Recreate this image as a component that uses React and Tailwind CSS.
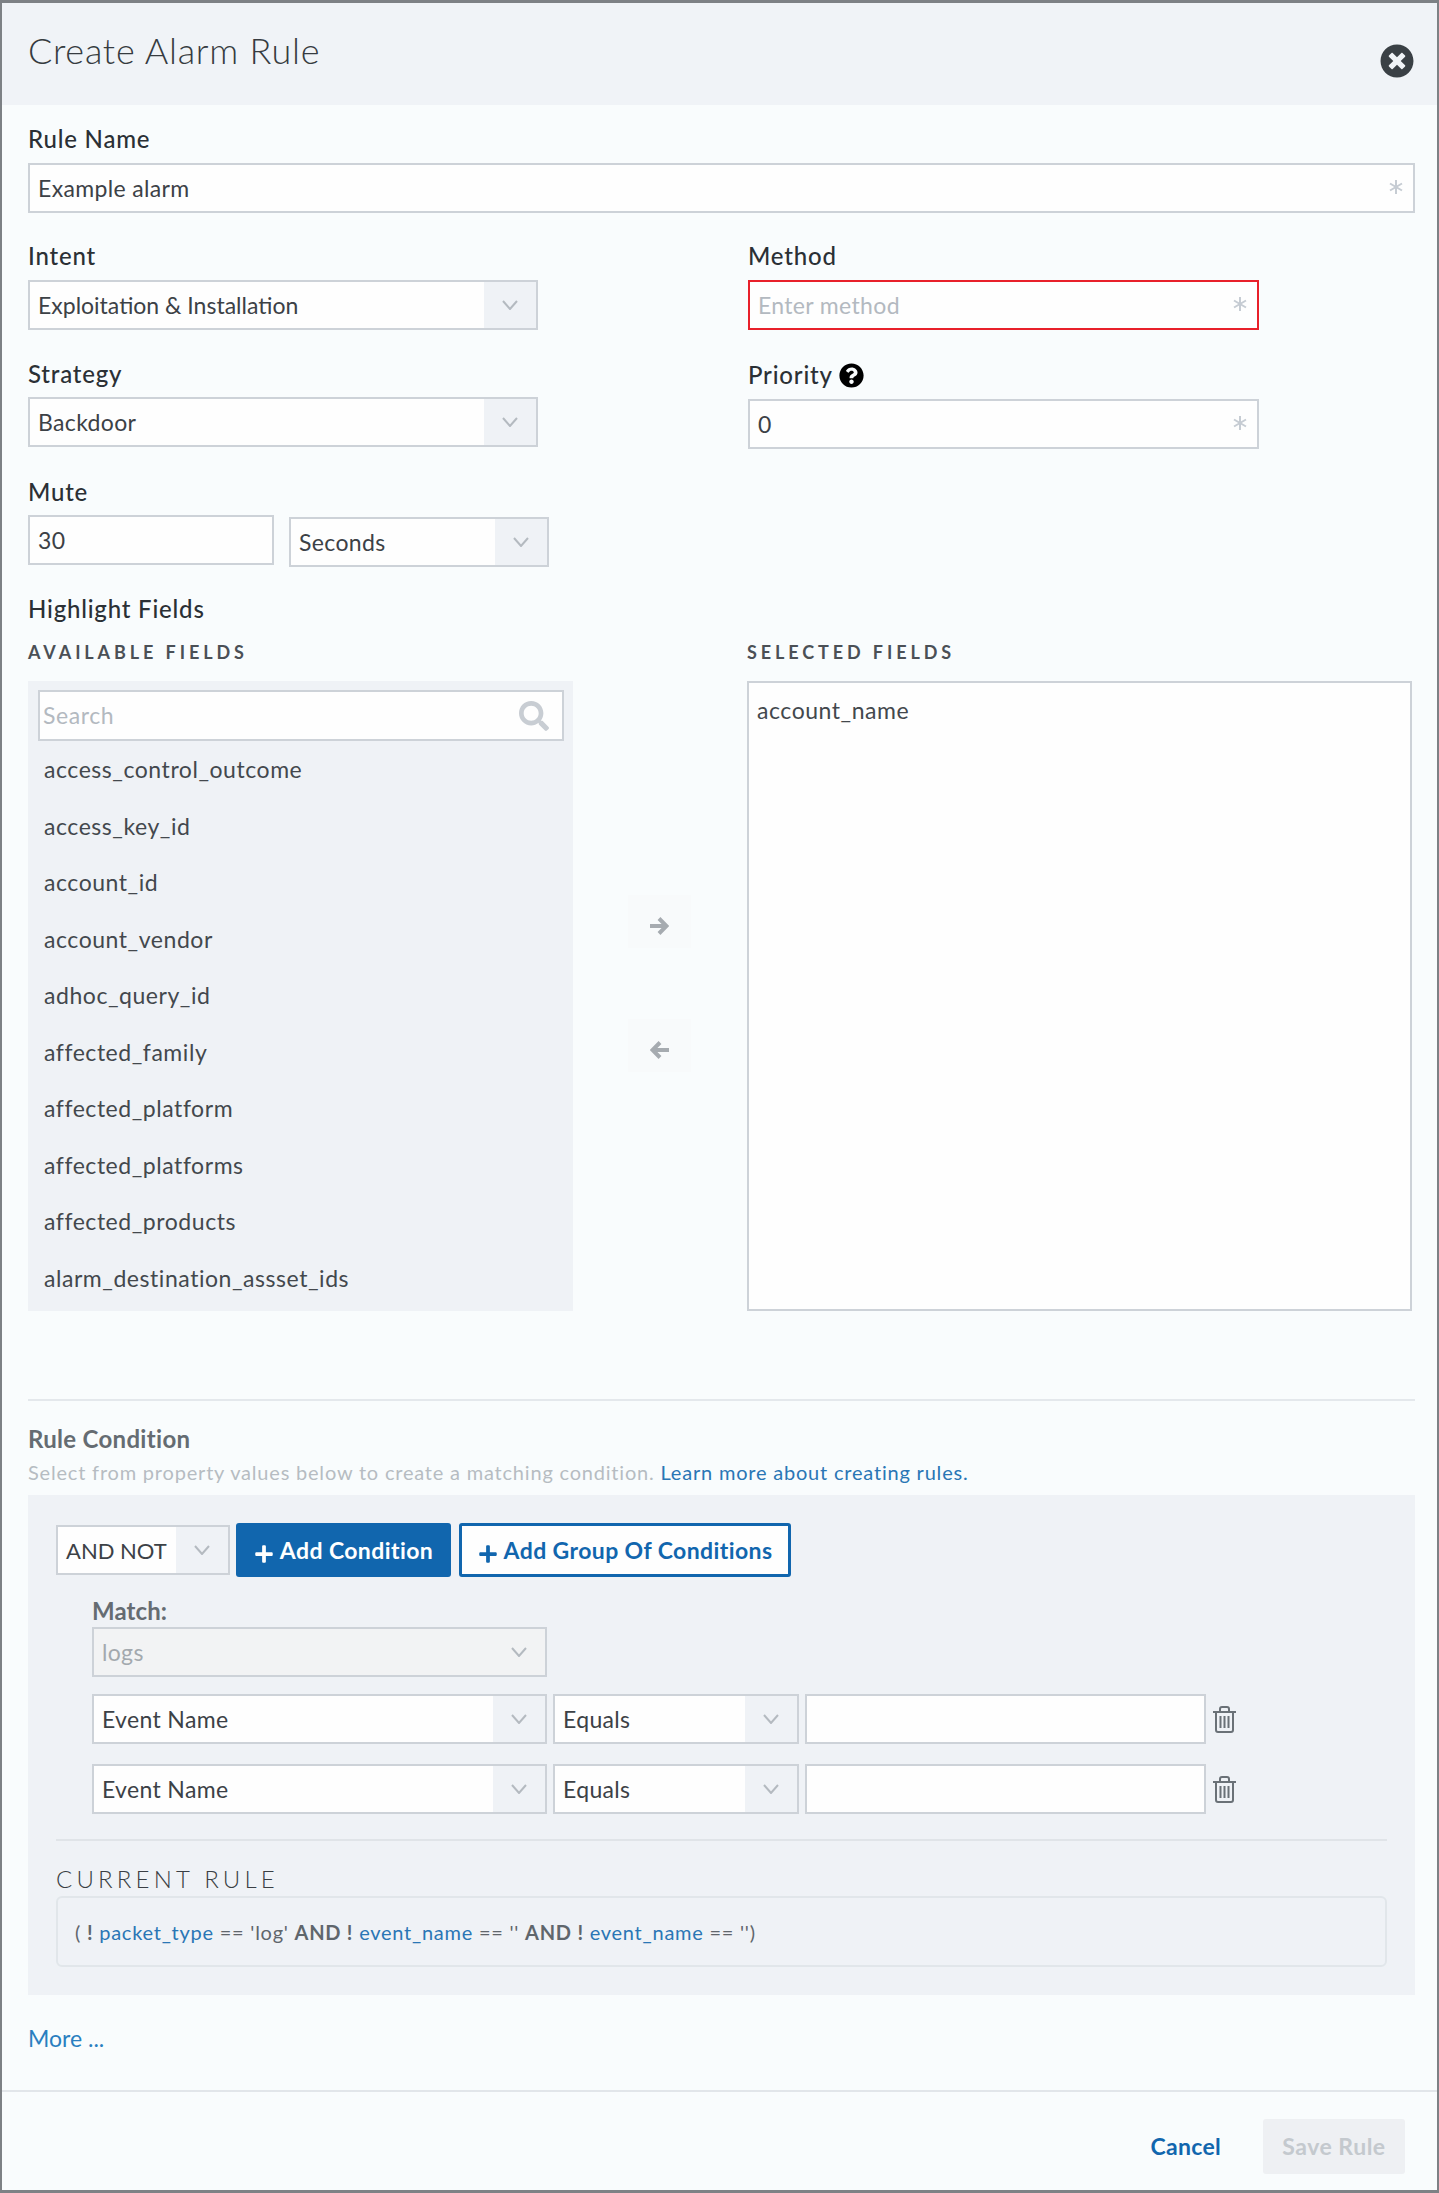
import { FaTimesCircle, FaQuestionCircle, FaSearch, FaPlus } from "react-icons/fa";

const fields = [
    "access_control_outcome",
    "access_key_id",
    "account_id",
    "account_vendor",
    "adhoc_query_id",
    "affected_family",
    "affected_platform",
    "affected_platforms",
    "affected_products",
    "alarm_destination_assset_ids",
];

function Label({ children, className = "" }) {
    return <div className={`h-[30px] leading-[30px] text-[24px] tracking-[0.8px] font-medium text-[#2b3035] ${className}`}>{children}</div>;
}

function Asterisk() {
    return (
        <svg width="14" height="14" viewBox="0 0 14 14" className="shrink-0 -mt-[3px] stroke-[#c6ccd3]" strokeWidth="2">
            <line x1="7" y1="0" x2="7" y2="14" />
            <line x1="1" y1="3.5" x2="13" y2="10.5" />
            <line x1="1" y1="10.5" x2="13" y2="3.5" />
        </svg>
    );
}

function Chevron() {
    return (
        <svg width="16" height="10" viewBox="0 0 16 10" fill="none" className="stroke-[#b4bac0]" strokeWidth="2">
            <polyline points="1,1 8,9 15,1" />
        </svg>
    );
}

function Arrow({ left }) {
    return (
        <svg width="19" height="18" viewBox="0 0 19 18" fill="none" className={`stroke-[#a6abb0] ${left ? "rotate-180" : ""}`} strokeWidth="4">
            <path d="M0 9h16" />
            <path d="M9 1.5L16.5 9L9 16.5" />
        </svg>
    );
}

function TextField({ value, placeholder, required, error, className = "" }) {
    return (
        <div className={`h-[50px] flex items-center justify-between pl-[8px] pr-[10px] bg-[#fefefe] border-2 ${error ? "border-[#e8202a]" : "border-[#cdd2d8]"} ${className}`}>
            <span className={`text-[23px] tracking-[0.35px] ${value ? "text-[#3c4146]" : "text-[#b3b9c0]"}`}>{value || placeholder}</span>
            {required && <Asterisk />}
        </div>
    );
}

function SelectBox({ value, disabled, className = "" }) {
    return (
        <div className={`h-[50px] flex items-stretch border-2 border-[#cdd2d8] ${disabled ? "bg-[#f2f3f4]" : "bg-[#fefefe]"} ${className}`}>
            <div className={`flex-1 flex items-center pl-[8px] text-[23px] tracking-[0.35px] ${disabled ? "text-[#a3a9ae]" : "text-[#3c4146]"}`}>{value}</div>
            <div className={`w-[52px] flex items-center justify-center ${disabled ? "" : "bg-[#eff2f6]"}`}>
                <Chevron />
            </div>
        </div>
    );
}

function Trash() {
    return (
        <svg width="23" height="27" viewBox="0 0 23 27" fill="none" className="stroke-[#6a7177]" strokeWidth="2">
            <path d="M0 6h23" />
            <path d="M7 6V3a2 2 0 0 1 2-2h5a2 2 0 0 1 2 2v3" />
            <path d="M3 6v18a2 2 0 0 0 2 2h13a2 2 0 0 0 2-2V6" />
            <path d="M7.5 10v12M11.5 10v12M15.5 10v12" />
        </svg>
    );
}

function ConditionRow() {
    return (
        <div className="flex items-center ml-[36px]">
            <SelectBox value="Event Name" className="w-[455px]" />
            <SelectBox value="Equals" className="w-[246px] ml-[6px]" />
            <div className="w-[401px] h-[50px] ml-[6px] bg-[#fefefe] border-2 border-[#cdd2d8]" />
            <div className="ml-[7px]">
                <Trash />
            </div>
        </div>
    );
}

export default function App() {
    return (
        <div className="w-[1439px] h-[2193px] flex flex-col bg-[#f9fcfd] border-x-2 border-y-[3px] border-[#7d8185] font-['Lato','Noto_Sans',sans-serif]">
            {/* Header */}
            <div className="h-[102px] shrink-0 bg-[#f0f3f7] pl-[26px] pr-[22px] flex items-start justify-between">
                <h1 className="mt-[25px] text-[36px] leading-[44px] tracking-[0.75px] font-light text-[#363b40]">Create Alarm Rule</h1>
                <FaTimesCircle className="mt-[41px] mr-[1px] text-[34px] text-[#3a4045]" />
            </div>

            <div className="flex-1 pl-[26px] pr-[22px]">
                <Label className="mt-[19px] mb-[9px]">Rule Name</Label>
                <TextField value="Example alarm" required />

                <div className="mt-[28px] flex">
                    <div className="w-[510px]">
                        <Label className="mb-[9px]">Intent</Label>
                        <SelectBox value={<span className="tracking-normal">Exploitation &amp; Installation</span>} />
                        <Label className="mt-[29px] mb-[8px]">Strategy</Label>
                        <SelectBox value="Backdoor" />
                    </div>
                    <div className="w-[511px] ml-[210px]">
                        <Label className="mb-[9px]">Method</Label>
                        <TextField placeholder="Enter method" required error />
                        <Label className="mt-[30px] mb-[9px] flex items-center gap-[6px] tracking-[0.4px]">
                            Priority <FaQuestionCircle className="text-[25px] text-black" />
                        </Label>
                        <TextField value="0" required />
                    </div>
                </div>

                <Label className="mt-[28px] mb-[8px]">Mute</Label>
                <div className="flex items-start">
                    <TextField value="30" className="w-[246px]" />
                    <SelectBox value="Seconds" className="w-[260px] ml-[15px] mt-[2px]" />
                </div>

                <Label className="mt-[27px]">Highlight Fields</Label>

                {/* Field picker */}
                <div className="mt-[17px] flex">
                    <div className="w-[545px]">
                        <div className="h-[22px] leading-[22px] text-[18px] font-bold tracking-[3.9px] text-[#4b5056]">AVAILABLE FIELDS</div>
                        <div className="mt-[18px] h-[630px] bg-[#eff2f6] pt-[9px] pl-[10px] pr-[9px]">
                            <div className="h-[51px] flex items-center justify-between pl-[3px] pr-[13px] bg-[#fefefe] border-2 border-[#cdd2d8]">
                                <span className="text-[23px] tracking-[0.6px] text-[#b3b9c0]">Search</span>
                                <FaSearch className="text-[30px] text-[#c8cdd3]" />
                            </div>
                            <ul className="pl-[6px]">
                                {fields.map((name) => (
                                    <li key={name} className="h-[56.5px] flex items-center text-[23px] tracking-[0.55px] text-[#43484d]">
                                        {name}
                                    </li>
                                ))}
                            </ul>
                        </div>
                    </div>

                    <div className="w-[174px] pt-[254px] pl-[55px] flex flex-col gap-[71px]">
                        <div className="w-[63px] h-[53px] pt-[8px] flex items-center justify-center bg-[#f8fafb]">
                            <Arrow />
                        </div>
                        <div className="w-[63px] h-[53px] pt-[8px] flex items-center justify-center bg-[#f8fafb]">
                            <Arrow left />
                        </div>
                    </div>

                    <div className="w-[665px]">
                        <div className="h-[22px] leading-[22px] text-[18px] font-bold tracking-[3.9px] text-[#4b5056]">SELECTED FIELDS</div>
                        <div className="mt-[18px] h-[630px] bg-[#fefefe] border-2 border-[#cdd2d8] pl-[8px] pt-[14px] text-[23px] tracking-[0.55px] leading-[26px] text-[#43484d]">
                            account_name
                        </div>
                    </div>
                </div>

                {/* Rule condition */}
                <div className="mt-[88px] h-[2px] bg-[#e4e8ec]" />
                <div className="mt-[23px] h-[30px] leading-[30px] text-[24px] tracking-[0.3px] font-bold text-[#656c72]">Rule Condition</div>
                <div className="mt-[5px] h-[26px] leading-[26px] text-[20px] tracking-[0.8px] text-[#b6bcc2]">
                    Select from property values below to create a matching condition.{" "}
                    <a className="text-[#2a76b5]">Learn more about creating rules.</a>
                </div>

                <div className="mt-[10px] h-[500px] bg-[#eff2f6] pt-[28px] px-[28px]">
                    <div className="flex items-center">
                        <SelectBox value={<span className="text-[22px] tracking-normal">AND NOT</span>} className="w-[174px]" />
                        <button className="w-[215px] h-[54px] ml-[6px] flex items-center justify-center gap-[6px] rounded-[3px] bg-[#1166ae] text-white text-[23px] tracking-[0.4px] font-bold">
                            <FaPlus className="text-[20px] mt-[7px]" /> Add Condition
                        </button>
                        <button className="w-[332px] h-[54px] ml-[8px] flex items-center justify-center gap-[6px] rounded-[3px] border-[3px] border-[#1166ae] bg-[#fefefe] text-[#1166ae] text-[23px] tracking-[0.4px] font-bold">
                            <FaPlus className="text-[20px] mt-[7px]" /> Add Group Of Conditions
                        </button>
                    </div>

                    <div className="mt-[19px] ml-[36px] h-[30px] leading-[30px] text-[24px] tracking-[0.1px] font-bold text-[#656c72]">Match:</div>
                    <SelectBox value="logs" disabled className="w-[455px] ml-[36px] mt-[1px]" />
                    <div className="mt-[17px]">
                        <ConditionRow />
                    </div>
                    <div className="mt-[20px]">
                        <ConditionRow />
                    </div>

                    <div className="mt-[25px] h-[2px] bg-[#e0e4e8]" />
                    <div className="mt-[24px] h-[28px] leading-[28px] text-[24px] font-light tracking-[4.2px] text-[#3a3f44]">CURRENT RULE</div>
                    <div className="mt-[3px] h-[71px] flex items-center pl-[17px] rounded-[6px] border-2 border-[#e1e6ea] text-[20px] tracking-[0.75px] text-[#5f666c]">
                        <span>
                            ( <b>!</b> <span className="text-[#2a76b5]">packet_type</span> == 'log' <b>AND !</b>{" "}
                            <span className="text-[#2a76b5]">event_name</span> == '' <b>AND !</b>{" "}
                            <span className="text-[#2a76b5]">event_name</span> == '')
                        </span>
                    </div>
                </div>

                <div className="mt-[29px] h-[28px] leading-[28px] text-[23px] text-[#2a7fc0]">More ...</div>
            </div>

            {/* Footer */}
            <div className="h-[100px] shrink-0 border-t-2 border-[#e2e6ea] pt-[27px] pr-[32px] flex items-start justify-end">
                <a className="h-[55px] leading-[55px] text-[23px] tracking-[0.3px] font-bold text-[#1166ae]">Cancel</a>
                <button className="w-[142px] h-[55px] ml-[42px] rounded-[3px] bg-[#eef0f3] text-[23px] tracking-[0.5px] font-bold text-[#c4c9ce]">Save Rule</button>
            </div>
        </div>
    );
}
